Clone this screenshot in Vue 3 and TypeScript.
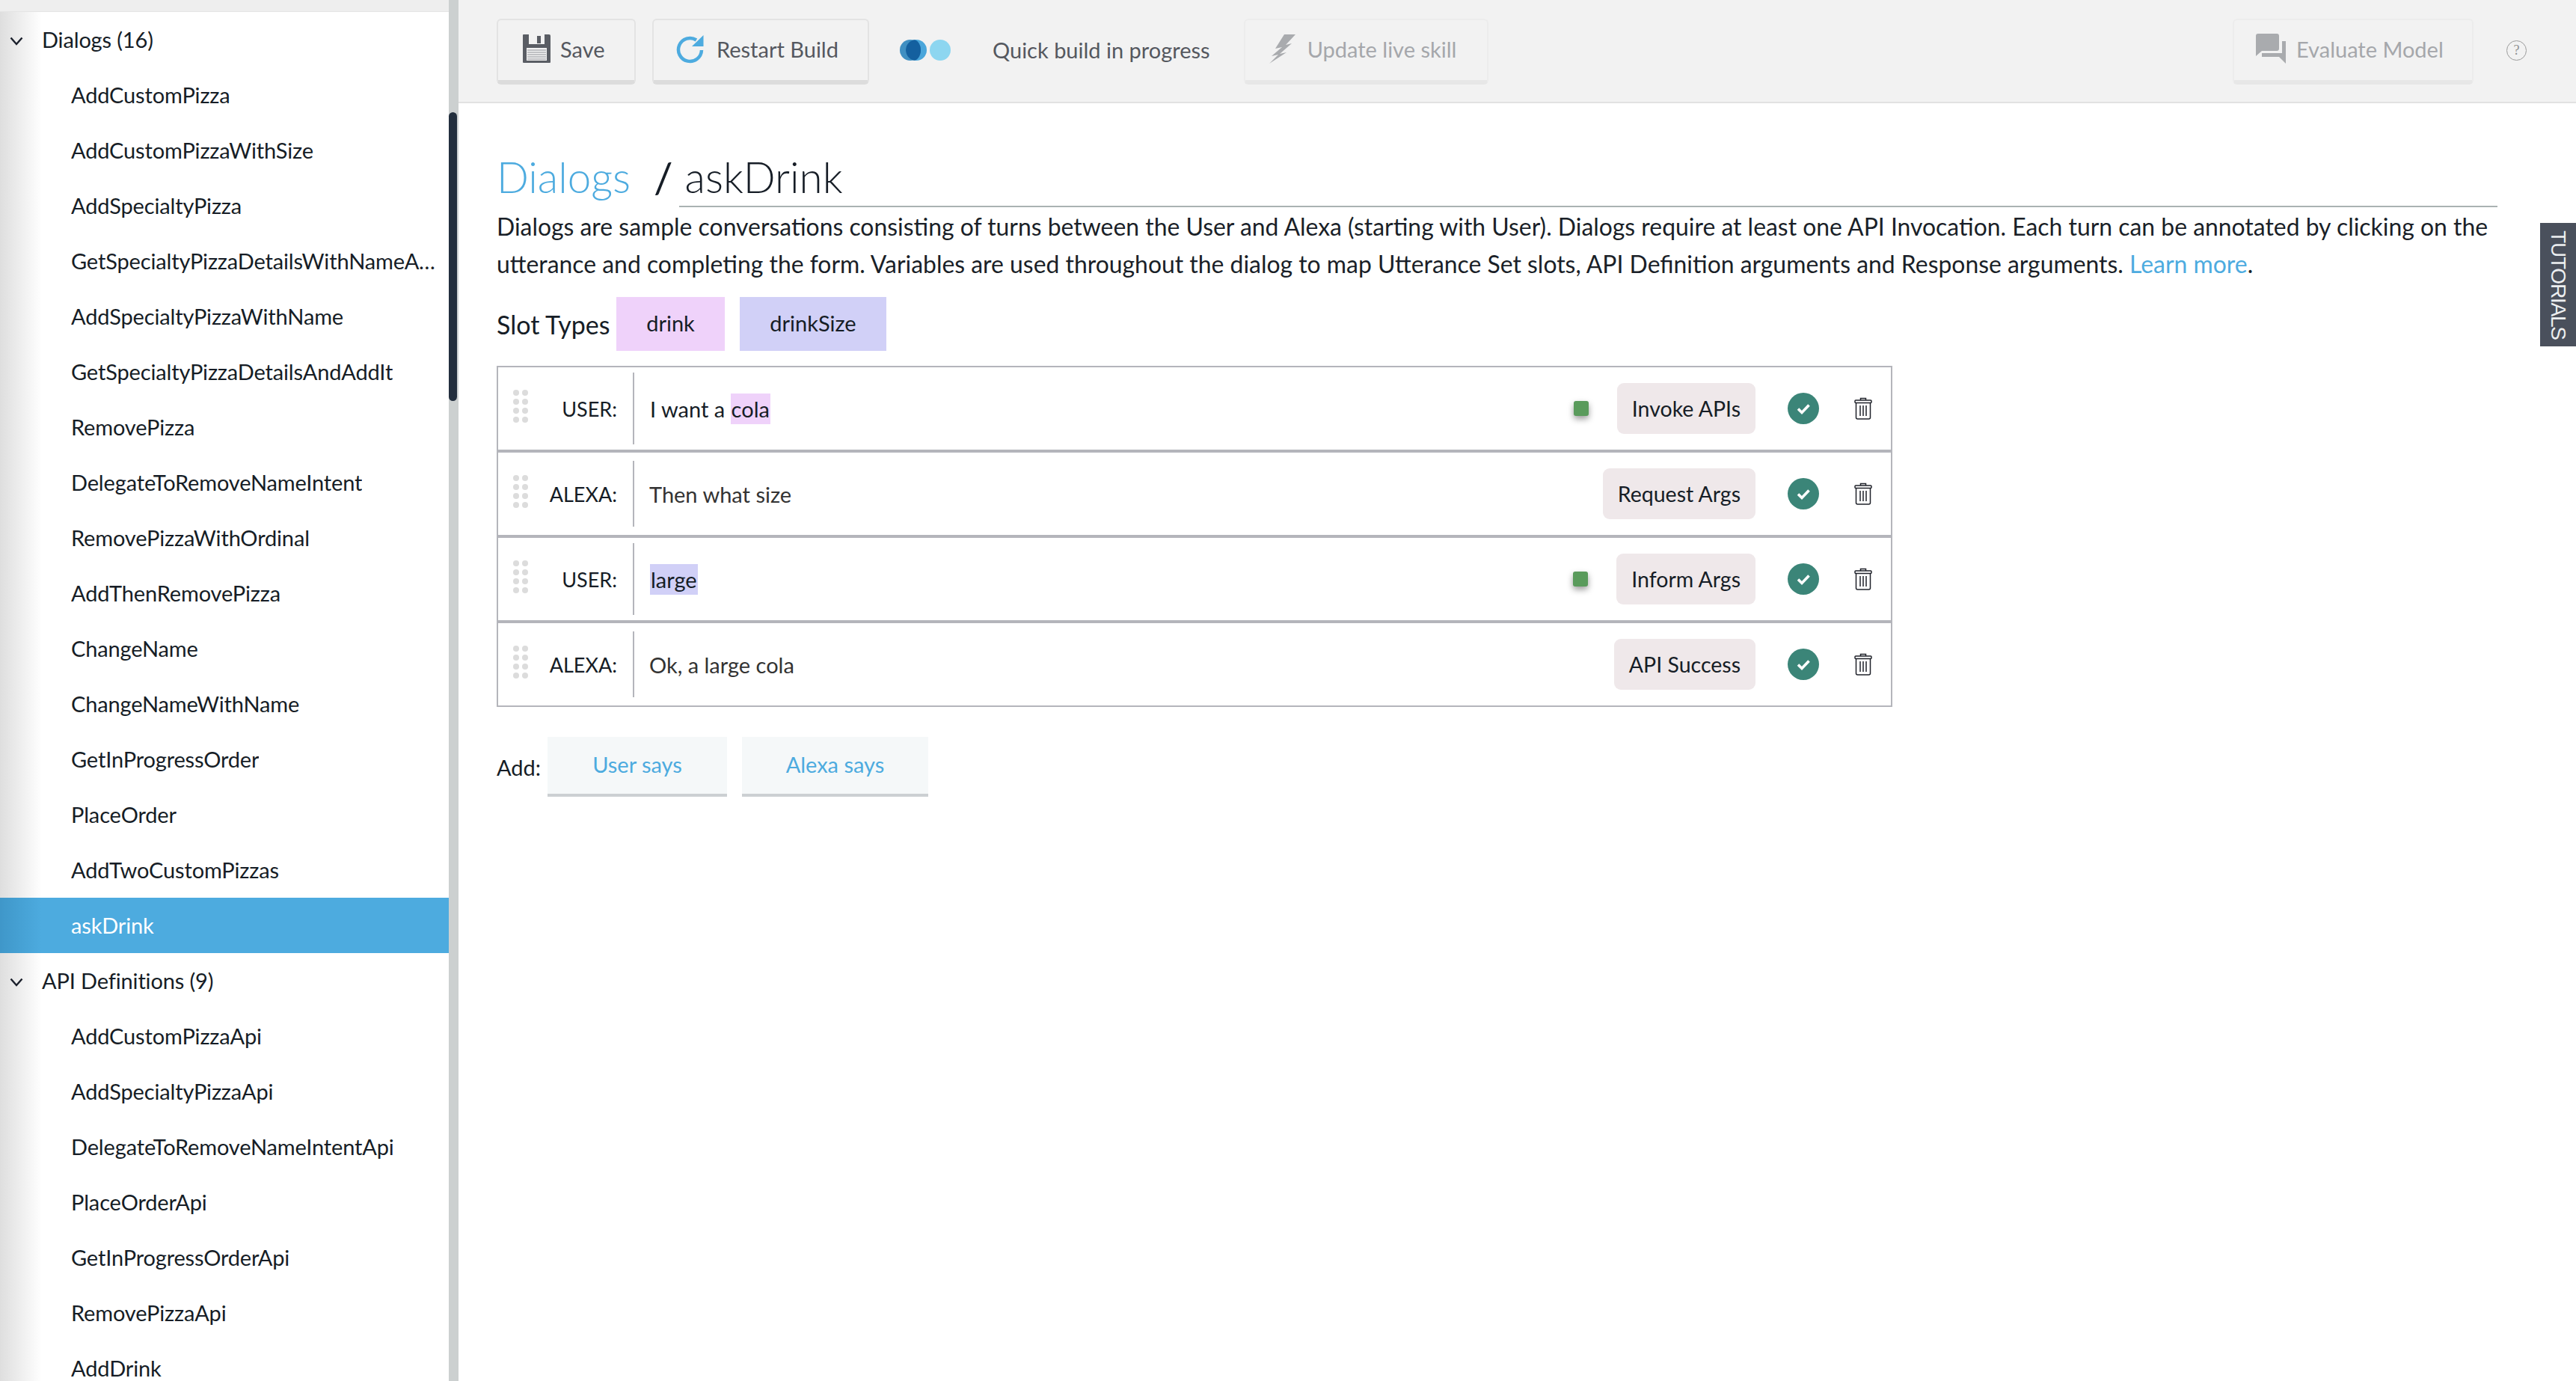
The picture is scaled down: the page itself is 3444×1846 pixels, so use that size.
<script setup lang="ts">
interface Turn {
  who: string
  kind: 'user' | 'alexa'
  action: string
  marker: boolean
}

const dialogs = [
  'AddCustomPizza', 'AddCustomPizzaWithSize', 'AddSpecialtyPizza', 'GetSpecialtyPizzaDetailsWithNameAndAddIt',
  'AddSpecialtyPizzaWithName', 'GetSpecialtyPizzaDetailsAndAddIt', 'RemovePizza', 'DelegateToRemoveNameIntent',
  'RemovePizzaWithOrdinal', 'AddThenRemovePizza', 'ChangeName', 'ChangeNameWithName',
  'GetInProgressOrder', 'PlaceOrder', 'AddTwoCustomPizzas', 'askDrink',
]
const apis = [
  'AddCustomPizzaApi', 'AddSpecialtyPizzaApi', 'DelegateToRemoveNameIntentApi', 'PlaceOrderApi',
  'GetInProgressOrderApi', 'RemovePizzaApi', 'AddDrink',
]

const turns: Turn[] = [
  { who: 'USER:', kind: 'user', action: 'Invoke APIs', marker: true },
  { who: 'ALEXA:', kind: 'alexa', action: 'Request Args', marker: false },
  { who: 'USER:', kind: 'user', action: 'Inform Args', marker: true },
  { who: 'ALEXA:', kind: 'alexa', action: 'API Success', marker: false },
]
</script>

<template>
  <div class="app">
    <aside class="side">
      <div class="tree">
        <div class="strip"></div>
        <div class="row head">
          <svg class="chev" width="18" height="12" viewBox="0 0 18 12"><path d="M1.5 1.5 9 10l7.5-8.500" fill="none" stroke="#1a1f2b" stroke-width="2.400" /></svg>
          <span>Dialogs (16)</span>
        </div>
        <div v-for="d in dialogs" :key="d" class="row item" :class="{ active: d === 'askDrink' }">
          <span class="ell">{{ d }}</span>
        </div>
        <div class="row head">
          <svg class="chev" width="18" height="12" viewBox="0 0 18 12"><path d="M1.5 1.5 9 10l7.5-8.500" fill="none" stroke="#1a1f2b" stroke-width="2.400" /></svg>
          <span>API Definitions (9)</span>
        </div>
        <div v-for="a in apis" :key="a" class="row item"><span class="ell">{{ a }}</span></div>
      </div>
      <div class="track"><div class="thumb"></div></div>
    </aside>

    <div class="content">
      <header class="toolbar">
        <button class="btn save">
          <svg width="37" height="38" viewBox="0 0 37 38">
            <path d="M1 0h34a2 2 0 0 1 2 2v35a1 1 0 0 1-1 1H1a1 1 0 0 1-1-1V1a1 1 0 0 1 1-1z" fill="#5a5d64" />
            <rect x="8" y="0" width="21" height="13" fill="#f2f2f2" />
            <rect x="19" y="2" width="5" height="10" fill="#5a5d64" />
            <rect x="5" y="18" width="27" height="17" fill="#f2f2f2" />
            <path d="M6 21h25M6 24h25M6 27h25M6 30h25M6 33h25" stroke="#8e9096" stroke-width="1" />
          </svg>
          Save
        </button>
        <button class="btn restart">
          <svg width="37" height="40" viewBox="0 0 37 40">
            <path d="M27 8.500A15.500 15.500 0 1 0 34 22" fill="none" stroke="#4dabdf" stroke-width="4.500" />
            <path d="M36.500 2v15H21z" fill="#4dabdf" />
          </svg>
          Restart Build
        </button>
        <div class="spinner">
          <i class="dot a"></i><i class="dot b"></i><i class="dot c"></i>
        </div>
        <span class="status">Quick build in progress</span>
        <button class="btn off update">
          <svg width="35" height="40" viewBox="0 0 35 40"><path d="M35 1H20L8 20l9-2L3 30l9-2L0 40l23-15-9 2 16-14-8 2z" fill="#a9abae" /></svg>
          Update live skill
        </button>
        <button class="btn off evaluate">
          <svg width="40" height="40" viewBox="0 0 40 40">
            <path d="M3 0h25a3 3 0 0 1 3 3v17a3 3 0 0 1-3 3H8l-8 7V3a3 3 0 0 1 3-3z" fill="#a9abae" />
            <path d="M35 10h5v30l-9-9H8v-5h27z" fill="#a9abae" />
          </svg>
          Evaluate Model
        </button>
        <span class="help">?</span>
      </header>

      <main class="main">
        <h1 class="title">
          <a class="crumb">Dialogs</a>
          <span class="slash">/</span>
          <span class="current">askDrink</span>
        </h1>
        <p class="intro">
          Dialogs are sample conversations consisting of turns between the User and Alexa (starting with User). Dialogs require at least one API Invocation. Each turn can be annotated by clicking on the utterance and completing the form. Variables are used throughout the dialog to map Utterance Set slots, API Definition arguments and Response arguments.
          <a class="link">Learn more</a>.
        </p>

        <div class="slots">
          <span class="slot-label">Slot Types</span>
          <span class="chip drink">drink</span>
          <span class="chip size">drinkSize</span>
        </div>

        <div class="turns">
          <div v-for="(t, i) in turns" :key="i" class="turn">
            <div class="drag"><i v-for="n in 8" :key="n"></i></div>
            <span class="who">{{ t.who }}</span>
            <span class="sep" :class="t.kind"></span>
            <div class="utter" :class="t.kind">
              <template v-if="i === 0">I want a <mark class="hl pink">cola</mark></template>
              <template v-else-if="i === 1">Then what size</template>
              <template v-else-if="i === 2"><mark class="hl violet">large</mark></template>
              <template v-else>Ok, a large cola</template>
            </div>
            <span v-if="t.marker" class="marker"></span>
            <button class="action">{{ t.action }}</button>
            <svg class="ok" width="42" height="42" viewBox="0 0 42 42">
              <circle cx="21" cy="21" r="21" fill="#3b8578" />
              <path d="M14 21.500l5 5 9.500-10" fill="none" stroke="#fff" stroke-width="3.600" />
            </svg>
            <svg class="trash" width="24" height="30" viewBox="0 0 24 30" fill="none" stroke="#20232b" stroke-width="1.500">
              <path d="M8.500 4V1.500h7V4" />
              <rect x="1" y="4" width="22" height="3.500" rx="1" />
              <path d="M2.500 7.500V27a2 2 0 0 0 2 2h15a2 2 0 0 0 2-2V7.500M8 11v14M12 11v14M16 11v14" />
            </svg>
          </div>
        </div>

        <div class="add">
          <span class="add-label">Add:</span>
          <button class="add-btn says-user">User says</button>
          <button class="add-btn says-alexa">Alexa says</button>
        </div>
      </main>

      <div class="tutorials">TUTORIALS</div>
    </div>
  </div>
</template>

<style>
html, body { margin: 0; background: #fff; overflow: hidden; }
</style>

<style scoped>
.app {
  display: flex;
  width: 3444px;
  height: 1846px;
  overflow: hidden;
  font-family: Lato, "Noto Sans", sans-serif;
  font-size: 29px;
  color: #161d26;
}
button { font: inherit; cursor: pointer; }

/* sidebar */
.side { display: flex; flex: none; width: 613px; height: 100%; }
.tree {
  width: 600px;
  overflow: hidden;
  background: linear-gradient(90deg, #dedede, #fff 56px);
  letter-spacing: -0.15px;
}
.strip { height: 15px; background: #eeeeee; border-bottom: 1px solid #e4e4e4; }
.row { display: flex; align-items: center; box-sizing: border-box; height: 74px; padding-bottom: 2px; }
.head { padding-left: 13px; }
.chev { margin-right: 25px; margin-top: 6px; }
.item { padding-left: 95px; padding-right: 12px; }
.ell { overflow: hidden; white-space: nowrap; text-overflow: ellipsis; }
.active { background: linear-gradient(90deg, #3f97c9, #4dabdf 56px); color: #fff; }
.track { width: 13px; background: #ccd0d0; }
.thumb { width: 11px; height: 386px; margin-top: 150px; border-radius: 6px; background: #232f3e; }

/* toolbar */
.content { position: relative; flex: 1; min-width: 0; }
.toolbar {
  display: flex;
  align-items: flex-start;
  box-sizing: border-box;
  height: 138px;
  padding: 25px 0 0 51px;
  background: #f2f2f2;
  border-bottom: 2px solid #e2e2e2;
  color: #55585f;
}
.btn {
  display: flex;
  align-items: center;
  box-sizing: border-box;
  height: 88px;
  padding: 0 0 4px 33px;
  gap: 17px;
  background: #f2f2f2;
  border: 2px solid #e3e3e3;
  border-bottom: 6px solid #dcdcdc;
  border-radius: 6px;
  color: #55585f;
  white-space: nowrap;
}
.save { width: 186px; gap: 13px; }
.restart { width: 290px; margin-left: 22px; padding-left: 30px; }
.off { color: #a5a7ab; border-color: #ececec; border-bottom-color: #e7e7e7; }
.update { width: 327px; margin-left: 45px; padding-left: 32px; gap: 16px; }
.evaluate { width: 322px; margin-left: auto; padding-left: 29px; gap: 14px; }
.spinner { position: relative; width: 69px; height: 28px; margin: 28px 0 0 41px; }
.dot { position: absolute; top: 0; width: 28px; height: 28px; border-radius: 50%; }
.dot.a { left: 0; background: #3f8fc2; box-shadow: 8px 0 0 #4aa6db; }
.dot.b { left: 8px; background: #14609f; clip-path: ellipse(10px 14px at 10px 14px); }
.dot.c { left: 40px; background: #8dd6f0; }
.status { margin: 24px 0 0 55px; line-height: 36px; }
.help {
  box-sizing: border-box;
  width: 27px;
  height: 27px;
  margin: 29px 66px 0 44px;
  border: 1.500px solid #9a9a9a;
  border-radius: 50%;
  color: #8f8f8f;
  font: 18px/24px "Liberation Serif", serif;
  text-align: center;
}

/* main */
.main { padding: 0 105px 0 51px; }
.title {
  display: flex;
  align-items: baseline;
  height: 139px;
  box-sizing: border-box;
  margin: 0;
  padding-top: 58px;
  font-size: 56.500px;
  font-weight: 300;
  line-height: 80px;
}
.crumb { color: #4dabdf; }
.slash { margin-left: 31px; font-weight: 400; }
.current { flex: 1; height: 79px; margin-left: 8px; padding-left: 8px; border-bottom: 2px solid #aab2b2; }
.intro { margin: 0; padding-top: 1px; color: #1a1f28; font-size: 31.900px; line-height: 50px; }
.link { color: #4dabdf; }
.slots { display: flex; align-items: center; margin-top: 19px; }
.slot-label { width: 160px; font-size: 34px; }
.chip { display: flex; align-items: center; justify-content: center; height: 72px; padding-bottom: 4px; box-sizing: border-box; }
.drink { width: 145px; background: #efd2fa; }
.size { width: 196px; margin-left: 20px; background: #d1d0f7; }

.turns { width: 1866px; margin-top: 20px; }
.turn {
  display: flex;
  align-items: center;
  box-sizing: border-box;
  height: 114px;
  padding: 0 25px 0 20px;
  border: 2px solid #b4b5bb;
}
.drag {
  display: grid;
  grid-template-columns: 8px 8px;
  gap: 4px;
  width: 20px;
  margin-bottom: 6px;
}
.drag i { width: 8px; height: 8px; border-radius: 50%; background: #dcdcdc; }
.who { width: 119px; font-size: 27px; text-align: right; }
.sep { flex: none; width: 2px; margin-left: 21px; background: #b4b5bb; }
.sep.user { height: 96px; }
.sep.alexa { height: 88px; }
.utter { flex: 1; padding-left: 21px; white-space: nowrap; }
.utter.alexa { color: #333; padding-left: 20px; }
.hl { display: inline-block; height: 41px; padding: 0 1px; line-height: 41px; color: inherit; }
.pink { background: #efd2fa; }
.violet { background: #d1d0f7; }
.marker {
  width: 20px;
  height: 20px;
  margin-right: 38px;
  border-radius: 3px;
  background: #5a9b5c;
  box-shadow: 0 4px 8px rgba(0, 0, 0, 0.4);
}
.action {
  height: 68px;
  padding: 0 20px;
  background: #efe8ea;
  border: 0;
  border-radius: 9px;
  color: #161d26;
  font-size: 28.500px;
}
.ok { margin-left: 43px; }
.trash { margin-left: 47px; }

.add { display: flex; align-items: center; margin-top: 40px; }
.add-label { width: 68px; }
.add-btn {
  height: 80px;
  padding: 0 0 4px;
  background: #f5f8f9;
  border: 0;
  border-bottom: 4px solid #ccd0d3;
  color: #4dabdf;
}
.says-user { width: 240px; }
.says-alexa { width: 249px; margin-left: 20px; }

.tutorials {
  position: absolute;
  top: 298px;
  right: 0;
  box-sizing: border-box;
  width: 48px;
  height: 165px;
  background: #4a505c;
  color: #eceef0;
  font: 28px/48px "Liberation Sans", sans-serif;
  letter-spacing: -1.200px;
  text-align: center;
  writing-mode: vertical-rl;
}
</style>
